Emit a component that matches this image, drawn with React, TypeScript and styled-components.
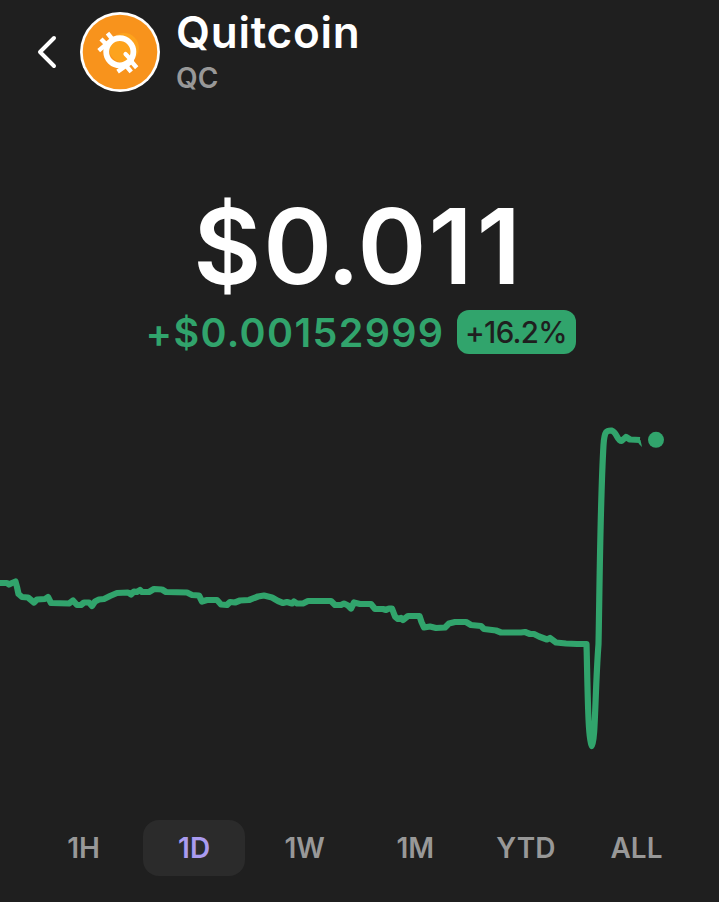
import React, { useState } from "react";
import styled, { createGlobalStyle } from "styled-components";

const GREEN = "#31a46c";
const GREY = "#989898";

const GlobalStyle = createGlobalStyle`
  * { box-sizing: border-box; }
  html, body { margin: 0; background: #1f1f1f; }
  body { overflow: hidden; font-family: Inter, "Liberation Sans", sans-serif; }
  button { font: inherit; border: 0; background: none; padding: 0; cursor: pointer; }
`;

const Screen = styled.main`
  display: flex;
  flex-direction: column;
  width: 719px;
  height: 902px;
  background: #1f1f1f;
  color: #fff;
`;

const Header = styled.header`
  display: flex;
  align-items: flex-start;
  height: 104px;
  padding: 12px 0 0 34px;
`;

const BackButton = styled.button`
  display: flex;
  align-items: center;
  width: 46px;
  height: 80px;
  color: #fff;
`;

const Titles = styled.div`
  display: flex;
  flex-direction: column;
  margin-left: 16px;
`;

const Name = styled.h1`
  margin: -6px 0 0;
  font-size: 44px;
  line-height: 52px;
  font-weight: 570;
  letter-spacing: 0.75px;
`;

const Symbol = styled.span`
  font-size: 28px;
  line-height: 34px;
  margin-top: 3px;
  font-weight: 600;
  color: ${GREY};
`;

const Quote = styled.section`
  display: flex;
  flex-direction: column;
  align-items: center;
  height: 296px;
  padding-top: 78px;
`;

const Price = styled.div`
  display: flex;
  margin-left: -1px;
  font-size: 104.5px;
  line-height: 128px;
  font-weight: 600;
  white-space: nowrap;
`;

const Glyph = styled.span<{ $tracking: number }>`
  letter-spacing: ${(p) => p.$tracking}px;
`;

const ChangeRow = styled.div`
  display: flex;
  align-items: center;
  gap: 12px;
  height: 44px;
  margin-left: 2px;
`;

const Change = styled.span`
  padding-top: 2px;
  font-size: 39.5px;
  line-height: 44px;
  font-weight: 560;
  letter-spacing: 1.35px;
  color: ${GREEN};
`;

const Badge = styled.span`
  display: flex;
  align-items: center;
  justify-content: center;
  width: 119px;
  height: 44px;
  border-radius: 12px;
  background: ${GREEN};
  color: #1f1f1f;
  font-size: 29.5px;
  font-weight: 500;
  letter-spacing: -0.7px;
`;

const Chart = styled.svg`
  display: block;
  width: 719px;
  height: 420px;
`;

const Ranges = styled.nav`
  display: grid;
  grid-template-columns: repeat(6, 102px);
  justify-content: space-between;
  padding: 0 32px;
`;

const Range = styled.button<{ $active: boolean }>`
  && {
    height: 56px;
    padding: 1px 0 0 1px;
    border-radius: 16px;
    font-size: 28px;
    line-height: 35px;
    font-weight: 600;
    color: ${(p) => (p.$active ? "#aa9bf0" : GREY)};
    background: ${(p) => (p.$active ? "#2b2b2b" : "transparent")};
  }
`;

function CoinLogo() {
  return (
    <svg width="80" height="80" viewBox="0 0 80 80" aria-label="Quitcoin logo">
      <circle cx="40" cy="40" r="40" fill="#fff" />
      <circle cx="40" cy="40" r="37.3" fill="#f8931c" />
      <circle cx="44" cy="36" r="15" fill="#fda31d" />
      <g fill="none" stroke="#fff">
        <circle cx="39.8" cy="39.8" r="13.6" strokeWidth="5.8" />
        <path d="M45.5 42 L51.7 48.5" strokeWidth="4.2" strokeLinecap="round" />
        <path
          d="M21 27 L28 34 M27.5 21.2 L33 28 M18.7 38.6 L32 27.5"
          strokeWidth="4.4"
        />
        <path
          d="M50.5 48.5 L56.7 55.7 M45.5 53 L51.2 59.8 M37.6 59.6 L52 49.5"
          strokeWidth="4.4"
        />
      </g>
    </svg>
  );
}

const LINE =
  "M-4 583 L7 583 L9 584.5 L12 583 L15.5 581.5 L17 587 L18.5 594 L22 597 L28 597.5 L34 602.5 L37 599.5 L45 599 L48 597 L51 603 L69 603.5 L73 600.5 L77 605 L81 605 L84 602.5 L89 602.5 L92 606 L95 601.5 L99 599.5 L104 599 L110 596 L117 593 L128 592.5 L131 594.5 L134 591.5 L137 592 L140 590 L142 592 L149 592 L154 589 L162 589.5 L166 592 L187 592.5 L192 595 L199 595.5 L202 601.5 L207 600 L217 600 L221 604.5 L227 605 L230 602 L235 602.5 L240 600.5 L249 600 L258 596.5 L264 595.5 L272 597.5 L278 601 L283 603 L287 602 L292 603.5 L294 601.5 L297 603.5 L303 603.5 L308 601 L331 601 L335 605 L341 605 L344 603.5 L348 605.5 L351 608.5 L354 602.5 L360 604 L371 604 L375 609 L383 609 L386 610 L389 608.5 L392 608.5 L395 616.5 L398 619 L401 618 L403 620 L408 616 L419.5 616 L421.5 622 L424 627.5 L430 626.5 L436 628 L445 627.5 L449 623.5 L455 622 L466 622 L471 625 L481 626 L484 629 L496 630.5 L501 632.5 L521 632.5 L525 632 L530 634 L534 634 L539 636.5 L547 639.5 L550 638 L556 642.5 L566 643.5 L577 644 L586.5 644 C587.5 680 588 744 591.7 746 C595.4 744 595 690 598.5 644 C599.5 600 600 505 603.5 445 C604.5 430 607 430.5 611.5 430.5 C617 432 617 441 621.5 441 L626 437 L630 439.5 L640 440";

function PriceChart() {
  return (
    <Chart viewBox="0 400 719 420" aria-label="Price chart, one day">
      <path
        d={LINE}
        fill="none"
        stroke={GREEN}
        strokeWidth="6.2"
        strokeLinejoin="round"
      />
      <path d="M637 440 L640.5 440 L642 447 L639 444 Z" fill={GREEN} />
      <circle cx="656" cy="439.8" r="8" fill={GREEN} />
    </Chart>
  );
}

const ranges = ["1H", "1D", "1W", "1M", "YTD", "ALL"];

export default function App() {
  const [active, setActive] = useState("1D");
  return (
    <Screen>
      <GlobalStyle />
      <Header>
        <BackButton aria-label="Back">
          <svg width="26" height="40" viewBox="0 0 26 40" fill="none">
            <path
              d="M20 6 L6 20 L20 34"
              stroke="#fff"
              strokeWidth="4"
              strokeLinecap="round"
              strokeLinejoin="round"
            />
          </svg>
        </BackButton>
        <CoinLogo />
        <Titles>
          <Name>Quitcoin</Name>
          <Symbol>QC</Symbol>
        </Titles>
      </Header>
      <Quote>
        <Price>
          <Glyph $tracking={2}>$</Glyph>
          <Glyph $tracking={-2.5}>0.</Glyph>
          <Glyph $tracking={2}>0</Glyph>
          <Glyph $tracking={4}>11</Glyph>
        </Price>
        <ChangeRow>
          <Change>+$0.00152999</Change>
          <Badge>+16.2%</Badge>
        </ChangeRow>
      </Quote>
      <PriceChart />
      <Ranges>
        {ranges.map((r) => (
          <Range key={r} $active={r === active} onClick={() => setActive(r)}>
            {r}
          </Range>
        ))}
      </Ranges>
    </Screen>
  );
}
